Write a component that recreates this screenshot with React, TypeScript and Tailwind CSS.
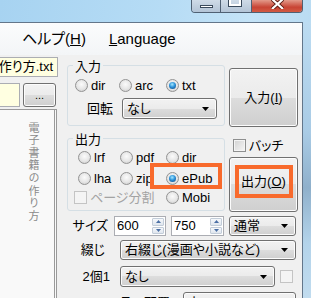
import React from 'react';

const btn =
  "rounded-[3px] border border-[#707070] bg-[linear-gradient(180deg,#f2f2f2_0%,#ebebeb_50%,#dddddd_50%,#cfcfcf_100%)] shadow-[inset_0_0_0_1px_#fcfcfc]";

function Radio({ label, checked, className = '' }: { label: string; checked?: boolean; className?: string }) {
  return (
    <div className={`flex items-center gap-[3px] ${className}`}>
      <span className="flex h-[13px] w-[13px] shrink-0 items-center justify-center rounded-full border border-[#939393] bg-[radial-gradient(circle_at_50%_40%,#fbfbfb_0%,#e6e6e6_55%,#c6c6c6_100%)]">
        {checked && (
          <span className="h-[7px] w-[7px] rounded-full bg-[radial-gradient(circle_at_45%_35%,#a6e9ff_0%,#2d93da_45%,#0b3f7a_100%)]" />
        )}
      </span>
      <span>{label}</span>
    </div>
  );
}

function Check({ label, disabled, className = '' }: { label?: string; disabled?: boolean; className?: string }) {
  return (
    <div className={`flex items-center gap-[3px] ${className}`}>
      <span
        className={`h-[13px] w-[13px] shrink-0 border ${
          disabled
            ? 'border-[#c4c4c4] bg-[#f4f4f4]'
            : 'border-[#8e8f8f] bg-[linear-gradient(135deg,#d2d2d2,#f6f6f6)] shadow-[inset_0_0_0_1px_#f4f4f4]'
        }`}
      />
      {label && <span className={disabled ? 'text-[#a3a3a3]' : ''}>{label}</span>}
    </div>
  );
}

function Select({ text, className = '' }: { text: string; className?: string }) {
  return (
    <div className={`flex items-center justify-between pl-[4px] pr-[7px] ${btn} ${className}`}>
      <span className="whitespace-nowrap">{text}</span>
      <svg width="7" height="4" viewBox="0 0 7 4">
        <path d="M0 0h7L3.5 4z" fill="#000" />
      </svg>
    </div>
  );
}

function Spin({ value, className = '' }: { value: string; className?: string }) {
  return (
    <div className={`flex border border-[#abadb3] bg-white ${className}`}>
      <span className="flex-1 pl-[2px] leading-[18px]">{value}</span>
      <div className="my-[1px] mr-[1px] flex w-[12px] flex-col gap-[1px]">
        <span className="flex flex-1 items-center justify-center rounded-[1px] border border-[#c2ccd8] bg-[linear-gradient(#f6f8fb,#dfe6ee)]">
          <svg width="5" height="3" viewBox="0 0 5 3">
            <path d="M0 3h5L2.5 0z" fill="#4b6fa5" />
          </svg>
        </span>
        <span className="flex flex-1 items-center justify-center rounded-[1px] border border-[#c2ccd8] bg-[linear-gradient(#f6f8fb,#dfe6ee)]">
          <svg width="5" height="3" viewBox="0 0 5 3">
            <path d="M0 0h5L2.5 3z" fill="#4b6fa5" />
          </svg>
        </span>
      </div>
    </div>
  );
}

export default function App() {
  return (
    <div className="flex h-[298px] w-[311px] flex-col overflow-hidden bg-[linear-gradient(100deg,#a7d3f1_0%,#b6dcf5_45%,#c4e3f7_70%,#b2d6ef_100%)] font-['Liberation_Sans','Noto_Sans_CJK_JP',sans-serif] text-[13px] text-black [font-feature-settings:'palt']">
      {/* title bar */}
      <div className="flex h-[22px] shrink-0 justify-end pr-[8px]">
        <div className="flex h-[13px] overflow-hidden rounded-b-[4px] border border-t-0 border-[#4f6073]">
          <div className="relative w-[29px] border-r border-[#4f6073] bg-[linear-gradient(#cfdbe7,#b3c4d6)]">
            <span className="absolute left-[8px] top-[5px] h-[3px] w-[13px] border border-[#3a4a5c] bg-white" />
          </div>
          <div className="relative w-[31px] border-r border-[#4f6073] bg-[linear-gradient(#cfdbe7,#b3c4d6)]">
            <span className="absolute left-[8px] -top-[2px] h-[8px] w-[12px] border-[2px] border-white shadow-[0_0_0_1px_#3a4a5c]" />
          </div>
          <div className="relative w-[50px] bg-[linear-gradient(#e39a8a,#c84434_60%,#d25a43)]">
            <svg className="absolute left-[19px] top-0" width="13" height="9" viewBox="0 0 13 9">
              <path d="M1 -1L6.5 4L12 -1M1 9L6.5 4L12 9" stroke="#5a1a12" strokeWidth="4" fill="none" />
              <path d="M1 -1L6.5 4L12 -1M1 9L6.5 4L12 9" stroke="#fff" strokeWidth="2.2" fill="none" />
            </svg>
          </div>
        </div>
      </div>

      <div className="flex min-h-0 flex-1">
        {/* client */}
        <div className="flex w-[303px] flex-col border-r border-t border-[#63768a] bg-[#f0f0f0]">
          {/* menu */}
          <div className="flex h-[32px] shrink-0 items-center gap-[23px] bg-[linear-gradient(#fbfcfd,#f3f5f7)] pl-[22px] text-[15px]">
            <span>
              ヘルプ(<span className="underline">H</span>)
            </span>
            <span>
              <span className="underline">L</span>anguage
            </span>
          </div>

          <div className="flex min-h-0 flex-1">
            {/* left column */}
            <div className="flex w-[58px] flex-col pt-[2px]">
              <div className="flex h-[20px] items-center justify-end overflow-hidden whitespace-nowrap border-y border-r border-[#abadb3] bg-[#ffffe1] pr-[4px]">
                電子書籍の作り方.txt
              </div>
              <div className="mt-[6px] flex h-[24px]">
                <div className="w-[20px] border-y border-r border-[#abadb3] bg-[#ffffe1]" />
                <div className={`ml-[3px] flex w-[33px] items-center justify-center text-[11px] ${btn}`}>...</div>
              </div>
              <div className="mt-[2px] w-[57px] flex-1 border-r-[3px] border-t border-double border-[#9a9a9a] bg-[#f9f9f9]">
                <div className="ml-[27px] mt-[12px] text-[11px] leading-[12px] tracking-[1.6px] text-[#8a8a8a] [writing-mode:vertical-rl]">
                  電子書籍の作り方
                </div>
              </div>
            </div>

            {/* right area */}
            <div className="flex flex-1 flex-col pl-[9px] pr-[4px]">
              <div className="flex gap-[4px]">
                <div className="flex w-[158px] flex-col">
                  {/* 入力 group */}
                  <div className="relative mt-[10px] h-[61px] rounded-[3px] border border-[#d5dfe5] pl-[7px] pt-[13px]">
                    <span className="absolute -top-[7px] left-[5px] bg-[#f0f0f0] px-[2px] leading-[16px]">入力</span>
                    <div className="flex h-[13px] items-center">
                      <Radio label="dir" className="w-[44px]" />
                      <Radio label="arc" className="w-[47px]" />
                      <Radio label="txt" checked />
                    </div>
                    <div className="mt-[6px] flex items-center pl-[12px]">
                      <span className="w-[35px]">回転</span>
                      <Select text="なし" className="h-[21px] w-[95px]" />
                    </div>
                  </div>

                  {/* 出力 group */}
                  <div className="relative mt-[12px] h-[73px] rounded-[3px] border border-[#d5dfe5] pl-[10px] pt-[12px]">
                    <span className="absolute -top-[7px] left-[5px] bg-[#f0f0f0] px-[2px] leading-[16px]">出力</span>
                    <div className="flex h-[13px] items-center">
                      <Radio label="lrf" className="w-[42px]" />
                      <Radio label="pdf" className="w-[46px]" />
                      <Radio label="dir" />
                    </div>
                    <div className="mt-[8px] flex h-[13px] items-center">
                      <Radio label="lha" className="w-[42px]" />
                      <Radio label="zip" className="w-[46px]" />
                      <Radio label="ePub" checked />
                    </div>
                    <div className="mt-[6px] flex h-[13px] items-center">
                      <Check label="ページ分割" disabled className="-ml-[4px] w-[92px]" />
                      <Radio label="Mobi" />
                    </div>
                    <div className="absolute left-[82px] top-[24px] h-[26px] w-[72px] border-[4px] border-[#f86a2c]" />
                  </div>
                </div>

                <div className="flex w-[69px] flex-col">
                  <div className={`mt-[13px] flex h-[59px] items-center justify-center ${btn}`}>
                    入力(<span className="underline">I</span>)
                  </div>
                  <Check label="バッチ" className="mt-[12px] h-[13px] pl-[4px]" />
                  <div className={`relative mt-[5px] flex h-[55px] items-center justify-center ${btn}`}>
                    <span className="pb-[5px]">
                      出力(<span className="underline">O</span>)
                    </span>
                    <div className="absolute left-[5px] top-[7px] h-[33px] w-[58px] border-[4px] border-[#f86a2c]" />
                  </div>
                </div>
              </div>

              <div className="mt-[4px] flex h-[20px] items-center">
                <span className="w-[47px] pr-[6px] text-right">サイズ</span>
                <Spin value="600" className="h-[20px] w-[52px]" />
                <Spin value="750" className="ml-[5px] h-[20px] w-[53px]" />
                <Select text="通常" className="ml-[5px] h-[20px] w-[67px]" />
              </div>
              <div className="mt-[4px] flex h-[20px] items-center">
                <span className="w-[53px] pr-[15px] text-right">綴じ</span>
                <Select text="右綴じ(漫画や小説など)" className="h-[20px] w-[176px]" />
              </div>
              <div className="mt-[6px] flex h-[21px] items-center">
                <span className="w-[53px] pr-[10px] text-right">2個1</span>
                <Select text="なし" className="h-[21px] w-[155px]" />
                <Check disabled className="ml-[5px]" />
              </div>
              <div className="mt-[5px] flex h-[21px] items-start">
                <span className="w-[116px] pr-[13px] pt-[1px] text-right">ルーラー配置</span>
                <Select text="上" className="h-[21px] w-[113px]" />
              </div>
            </div>
          </div>
        </div>
        {/* window frame */}
        <div className="w-[8px] bg-[linear-gradient(180deg,#bcdcf2_0%,#a9cbe5_40%,#8fb0cb_60%,#b3d3ea_80%,#c1dcef_100%)]" />
      </div>
    </div>
  );
}
